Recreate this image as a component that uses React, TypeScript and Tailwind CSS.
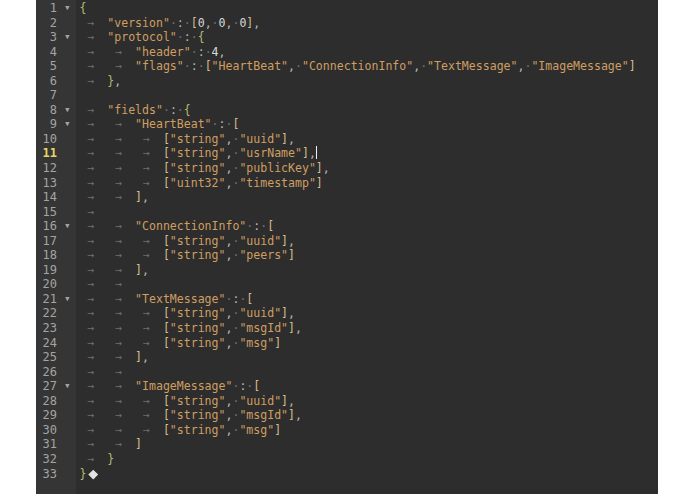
import React from "react";

const T = "\t";
const lines: string[] = [
  "{",
  T + '"version" : [0, 0, 0],',
  T + '"protocol" : {',
  T + T + '"header" : 4,',
  T + T + '"flags" : ["HeartBeat", "ConnectionInfo", "TextMessage", "ImageMessage"]',
  T + "},",
  "",
  T + '"fields" : {',
  T + T + '"HeartBeat" : [',
  T + T + T + '["string", "uuid"],',
  T + T + T + '["string", "usrName"],',
  T + T + T + '["string", "publicKey"],',
  T + T + T + '["uint32", "timestamp"]',
  T + T + "],",
  T,
  T + T + '"ConnectionInfo" : [',
  T + T + T + '["string", "uuid"],',
  T + T + T + '["string", "peers"]',
  T + T + "],",
  T + T,
  T + T + '"TextMessage" : [',
  T + T + T + '["string", "uuid"],',
  T + T + T + '["string", "msgId"],',
  T + T + T + '["string", "msg"]',
  T + T + "],",
  T + T,
  T + T + '"ImageMessage" : [',
  T + T + T + '["string", "uuid"],',
  T + T + T + '["string", "msgId"],',
  T + T + T + '["string", "msg"]',
  T + T + "]",
  T + "}",
  "}",
];

const folds = new Set([1, 3, 8, 9, 16, 21, 27]);
const ACTIVE = 11;

function renderLine(src: string, ln: number) {
  const out: React.ReactNode[] = [];
  let i = 0;
  let k = 0;
  while (i < src.length) {
    const c = src[i];
    if (c === "\t") {
      out.push(
        <span key={k++} className="inline-block w-[4ch] pl-[8px] text-[#707070]">
          {"\u2192"}
        </span>
      );
      i++;
    } else if (c === " ") {
      out.push(
        <span key={k++} className="text-[#707070]">
          {"\u00b7"}
        </span>
      );
      i++;
    } else if (c === '"') {
      let j = i + 1;
      while (j < src.length && src[j] !== '"') j++;
      out.push(
        <span key={k++} className="text-[#cf9f62]">
          {src.slice(i, j + 1)}
        </span>
      );
      i = j + 1;
    } else if (/[0-9]/.test(c)) {
      out.push(
        <span key={k++} className="text-[#d8d8d8]">
          {c}
        </span>
      );
      i++;
    } else if (c === "{" || c === "}") {
      out.push(
        <span key={k++} className="text-[#b4b96e]">
          {c}
        </span>
      );
      i++;
    } else if (c === "[" || c === "]") {
      out.push(
        <span key={k++} className="text-[#d6bc8c]">
          {c}
        </span>
      );
      i++;
    } else {
      out.push(
        <span key={k++} className="text-[#b8b8b8]">
          {c}
        </span>
      );
      i++;
    }
  }
  if (ln === ACTIVE) {
    out.push(
      <span
        key={k++}
        className="inline-block w-[1px] h-[13px] bg-[#f0f0f0] align-[-2px]"
      />
    );
  }
  if (ln === 33) {
    out.push(
      <span key={k++} className="inline-block w-[1ch] h-[14.56px] align-top relative">
        <span className="absolute left-[4px] top-[4px] w-[6.5px] h-[6.5px] bg-[#e4e4e4] rotate-45" />
      </span>
    );
  }
  return out;
}

export default function App() {
  return (
    <div className="w-[695px] h-[494px] bg-white flex overflow-hidden">
      <div className="ml-[36px] w-[622px] h-[494px] bg-[#2d2d2d] flex font-['DejaVu_Sans_Mono',monospace] text-[11.56px]">
        <div className="w-[40px] bg-[#353535] pt-[1px] shrink-0">
          {lines.map((_, idx) => {
            const ln = idx + 1;
            return (
              <div key={ln} className="h-[14.56px] leading-[14.56px] flex">
                <span
                  className={
                    "w-[21px] text-right text-[12px] " +
                    (ln === ACTIVE ? "text-[#e6d867] font-bold" : "text-[#a4a4a4]")
                  }
                >
                  {ln}
                </span>
                <span className="w-[19px] pl-[7px] text-[11px] text-[#a4a4a4]">
                  {folds.has(ln) ? "\u25be" : ""}
                </span>
              </div>
            );
          })}
        </div>
        <div className="pl-[3.5px] pt-[1px] whitespace-pre">
          {lines.map((src, idx) => (
            <div key={idx} className="h-[14.56px] leading-[14.56px]">
              {renderLine(src, idx + 1)}
            </div>
          ))}
        </div>
      </div>
    </div>
  );
}
